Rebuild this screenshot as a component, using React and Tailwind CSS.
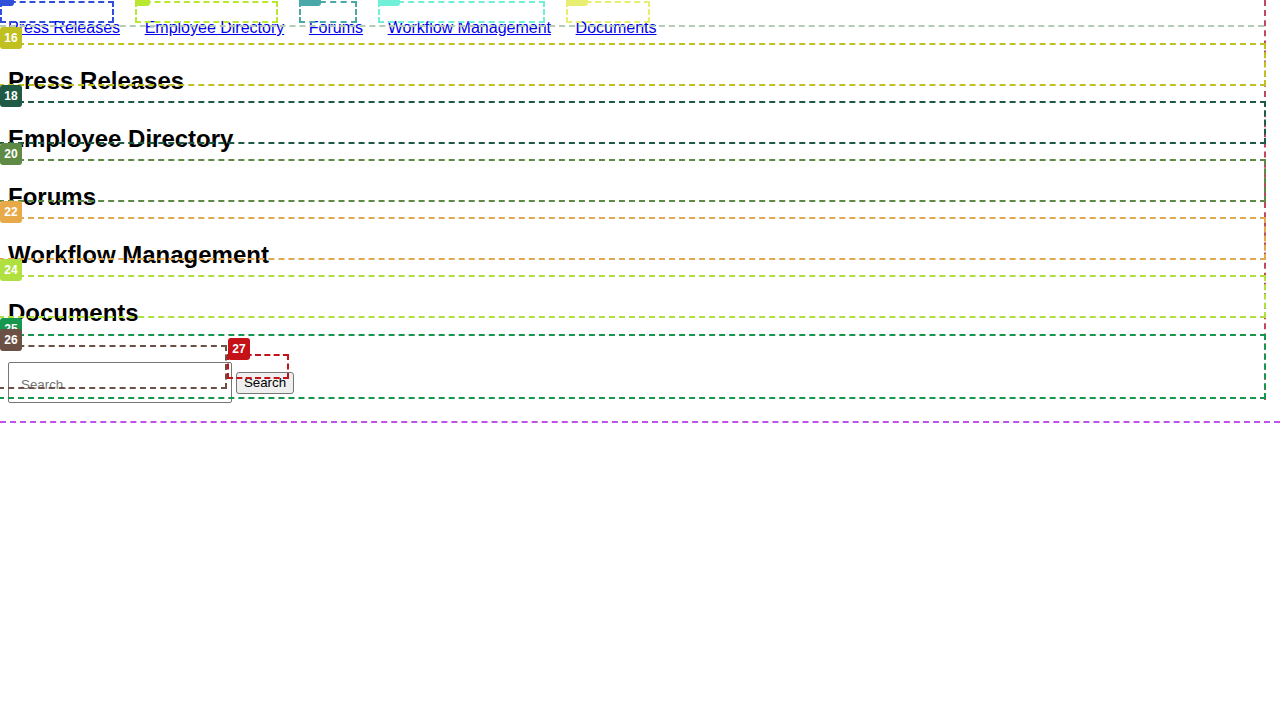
import React from 'react';

const links = ['Press Releases', 'Employee Directory', 'Forums', 'Workflow Management', 'Documents'];

const Label = ({ className, children }) => (
  <div className={`absolute h-[22px] rounded-[3px] text-white text-[12px] font-bold leading-[22px] text-center ${className}`}>
    {children}
  </div>
);

// debug outline layer drawn on top of the page
const Overlay = () => (
  <div className="absolute inset-0 pointer-events-none">
    <div className="absolute left-0 top-[1px] w-[114px] h-[22px] border-2 border-dashed border-[#2f4fd8]" />
    <Label className="left-0 top-[-16px] w-[14px] bg-[#2f4fd8]" />
    <div className="absolute left-[135px] top-[1px] w-[143px] h-[22px] border-2 border-dashed border-[#b8e830]" />
    <Label className="left-[135px] top-[-16px] w-[15px] bg-[#b8e830]" />
    <div className="absolute left-[299px] top-[1px] w-[58px] h-[22px] border-2 border-dashed border-[#4aa8a8]" />
    <Label className="left-[299px] top-[-16px] w-[22px] bg-[#4aa8a8]" />
    <div className="absolute left-[378px] top-[1px] w-[167px] h-[22px] border-2 border-dashed border-[#70f0d8]" />
    <Label className="left-[378px] top-[-16px] w-[22px] bg-[#70f0d8]" />
    <div className="absolute left-[566px] top-[1px] w-[84px] h-[22px] border-2 border-dashed border-[#e8ee70]" />
    <Label className="left-[566px] top-[-16px] w-[22px] bg-[#e8ee70]" />

    <div className="absolute left-0 top-[25px] w-[1264px] border-t-2 border-dashed border-[#b4ccb4]" />
    <div className="absolute left-[1264px] top-0 h-[400px] border-l-2 border-dashed border-[#c04860]" />

    <div className="absolute left-[-2px] top-[43px] w-[1268px] h-[43px] border-2 border-dashed border-[#c0c020]" />
    <Label className="left-0 top-[27px] w-[22px] bg-[#c0c020]">16</Label>
    <div className="absolute left-[-2px] top-[101px] w-[1268px] h-[43px] border-2 border-dashed border-[#1f5a45]" />
    <Label className="left-0 top-[85px] w-[22px] bg-[#1f5a45]">18</Label>
    <div className="absolute left-[-2px] top-[159px] w-[1268px] h-[43px] border-2 border-dashed border-[#5f8a45]" />
    <Label className="left-0 top-[143px] w-[22px] bg-[#5f8a45]">20</Label>
    <div className="absolute left-[-2px] top-[217px] w-[1268px] h-[43px] border-2 border-dashed border-[#e0a850]" />
    <Label className="left-0 top-[201px] w-[22px] bg-[#e8aa48]">22</Label>
    <div className="absolute left-[-2px] top-[275px] w-[1268px] h-[43px] border-2 border-dashed border-[#b0e040]" />
    <Label className="left-0 top-[259px] w-[22px] bg-[#b0e040]">24</Label>

    <div className="absolute left-[-2px] top-[334px] w-[1268px] h-[65px] border-2 border-dashed border-[#17964e]" />
    <Label className="left-0 top-[318px] w-[22px] bg-[#17964e]">25</Label>
    <div className="absolute left-[-2px] top-[345px] w-[229px] h-[44px] border-2 border-dashed border-[#6b5045]" />
    <Label className="left-0 top-[329px] w-[22px] bg-[#6b5045]">26</Label>
    <div className="absolute left-[227px] top-[354px] w-[62px] h-[25px] border-2 border-dashed border-[#c41218]" />
    <Label className="left-[228px] top-[338px] w-[22px] bg-[#c41218]">27</Label>

    <div className="absolute left-0 top-[421px] w-[1280px] border-t-2 border-dashed border-[#c050e8]" />
  </div>
);

export default function App() {
  return (
    <div className="relative min-h-screen overflow-hidden bg-white text-black font-['Liberation_Sans',Arial,sans-serif]">
      <div className="px-2">
        <nav className="flex gap-[24.6px] pt-[18px] text-base leading-[19px]">
          {links.map((l) => (
            <a key={l} href="#" className="text-[#0000ee] underline">{l}</a>
          ))}
        </nav>

        <main className="mt-[15px]">
          {links.map((l) => (
            <section key={l} className="py-[15px]">
              <h2 className="text-2xl font-bold leading-[28px]">{l}</h2>
            </section>
          ))}
        </main>

        <form className="mt-[20px] flex items-center gap-1" onSubmit={(e) => e.preventDefault()}>
          <input
            type="text"
            placeholder="Search..."
            className="w-[224px] h-[41px] px-3 pt-[3px] border border-[#767676] rounded-[2px] text-[13.33px] placeholder:text-[#757575] outline-none"
          />
          <button
            type="submit"
            className="h-[22px] w-[58px] border border-[#767676] bg-[#efefef] rounded-[3px] text-[13.33px] leading-none"
          >
            Search
          </button>
        </form>
      </div>
      <Overlay />
    </div>
  );
}
